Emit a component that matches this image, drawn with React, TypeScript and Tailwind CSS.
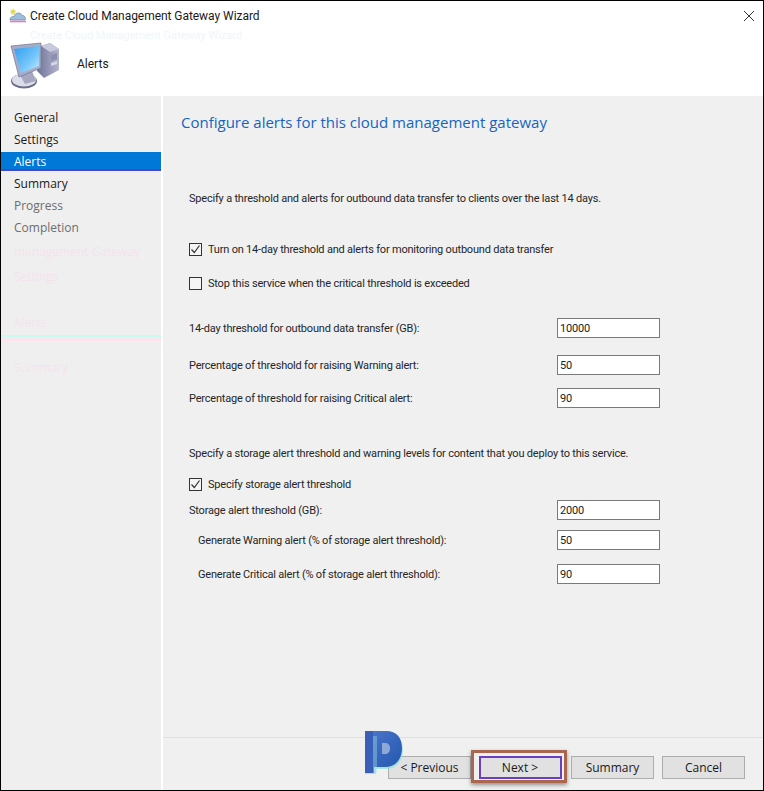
const steps = [
  { label: 'General', cls: 'h-[22px] text-[#1a1a1a]' },
  { label: 'Settings', cls: 'h-[22px] text-[#1a1a1a]' },
  { label: 'Alerts', cls: 'h-[19px] mt-[1px] mb-[2px] pt-[2px] text-white bg-[#0078d7] border-b-2 border-[#4a45c0]' },
  { label: 'Summary', cls: 'h-[22px] text-[#1a1a1a]' },
  { label: 'Progress', cls: 'h-[22px] text-[#6d6d6d]' },
  { label: 'Completion', cls: 'h-[22px] text-[#6d6d6d]' },
];

function Check({ checked }: { checked?: boolean }) {
  return (
    <span className="w-[13px] h-[13px] border border-[#333] bg-[#f4f4f4] flex items-center justify-center shrink-0">
      {checked && (
        <svg width="11" height="11" viewBox="0 0 11 11">
          <path d="M1.5 5.5 L4.3 8.5 L9.5 1.5" fill="none" stroke="#333" strokeWidth="1.2" />
        </svg>
      )}
    </span>
  );
}

function CheckRow({ label, checked, className }: { label: string; checked?: boolean; className: string }) {
  return (
    <div className={`flex items-center gap-[6px] h-[18px] ${className}`}>
      <Check checked={checked} />
      <span>{label}</span>
    </div>
  );
}

function FieldRow({ label, value, className, indent }: { label: string; value: string; className: string; indent?: boolean }) {
  return (
    <div className={`flex items-center justify-between h-[20px] ${className}`}>
      <span className={indent ? 'ml-[9px]' : ''}>{label}</span>
      <div className="w-[103px] h-[20px] border border-[#7a7a7a] bg-white flex items-center pl-[2px] text-[#222]">{value}</div>
    </div>
  );
}

function WizardButton({ label }: { label: string }) {
  return (
    <button className="w-[83px] h-[23px] border border-[#adadad] bg-[#e1e1e1] text-[#1a1a1a] text-[12px] font-['Open_Sans',sans-serif] flex items-center justify-center">
      {label}
    </button>
  );
}

function ComputerIcon() {
  return (
    <svg width="52" height="50" viewBox="0 0 52 50">
      <defs>
        <linearGradient id="screen" x1="0" y1="0" x2="1" y2="1">
          <stop offset="0" stopColor="#2f9df0" />
          <stop offset="0.6" stopColor="#74c6f8" />
          <stop offset="1" stopColor="#c9ecff" />
        </linearGradient>
        <linearGradient id="tower" x1="0" y1="0" x2="1" y2="0">
          <stop offset="0" stopColor="#6f7396" />
          <stop offset="1" stopColor="#b3b5cf" />
        </linearGradient>
      </defs>
      <path d="M31 6 L40 3 L49 9 L49 30 L34 38 L27 31 Z" fill="url(#tower)" />
      <path d="M40 3 L49 9 L40 12 L31 6 Z" fill="#c7c9dc" />
      <path d="M41 15 L47 13 L47 19 L41 21 Z" fill="#8d90ad" />
      <path d="M41 23 L47 21 L47 24 L41 26 Z" fill="#d6d7e4" />
      <ellipse cx="14" cy="41" rx="13" ry="7.5" fill="#6d6f8a" />
      <ellipse cx="14" cy="40" rx="12" ry="6.5" fill="#dcdde9" />
      <path d="M10 35 L22 31 L26 41 L15 44 Z" fill="#a6a8c2" />
      <path d="M1 6 L31 3 L31 28 L9 37 Z" fill="#a9acc6" stroke="#6f7396" strokeWidth="0.7" />
      <path d="M4 9 L29 6 L29 26 L11 33 Z" fill="url(#screen)" />
    </svg>
  );
}

function CloudIcon() {
  return (
    <svg width="18" height="16" viewBox="0 0 18 16">
      <path d="M4 0.5 V7 M1 3.7 H7 M1.8 1.5 L6.2 6 M6.2 1.5 L1.8 6" stroke="#d8d24a" strokeWidth="0.8" />
      <circle cx="4" cy="3.7" r="2" fill="#e2dc4c" />
      <path d="M1 12 C1 9 3 8.5 5 8.5 C6 4.5 12 3.5 13 7.5 C16 7.5 17 10 16 12 Z" fill="#9cc0dc" stroke="#6b7f9c" strokeWidth="0.7" />
      <path d="M1 13.5 H17" stroke="#e07cc4" strokeWidth="1.6" />
    </svg>
  );
}

function Ghost({ className, children }: { className: string; children: string }) {
  return <div className={`pl-[13px] whitespace-nowrap text-[#f6e2ee] text-[12px] ${className}`}>{children}</div>;
}

export default function App() {
  return (
    <div className="relative w-[764px] h-[791px] border border-black bg-white text-[11px] tracking-[-0.2px] leading-none text-[#262626] flex flex-col overflow-hidden font-['Roboto',sans-serif]">
      <div className="h-[30px] flex items-center shrink-0 tracking-normal">
        <span className="ml-[8px]"><CloudIcon /></span>
        <span className="ml-[3px] text-[12px] tracking-[-0.05px] text-[#1a1a1a]">Create Cloud Management Gateway Wizard</span>
        <svg className="ml-auto mr-[8px]" width="12" height="12" viewBox="0 0 12 12">
          <path d="M1 1 L11 11 M11 1 L1 11" stroke="#333" strokeWidth="1" />
        </svg>
      </div>
      <div className="relative h-[65px] flex items-start shrink-0 tracking-normal">
        <span className="absolute left-[29px] top-[-1px] text-[11px] text-[#eef6fc] whitespace-nowrap">Create Cloud Management Gateway Wizard</span>
        <span className="ml-[9px] mt-[9px]"><ComputerIcon /></span>
        <span className="ml-[15px] mt-[27px] text-[12px] text-[#1a1a1a]">Alerts</span>
      </div>
      <div className="flex flex-1 min-h-0">
        <div className="w-[160px] bg-[#efefef] pt-[11px] shrink-0 tracking-normal font-['Open_Sans',sans-serif]">
          {steps.map(s => (
            <div key={s.label} className={`flex items-center pl-[13px] text-[12px] ${s.cls}`}>{s.label}</div>
          ))}
          <Ghost className="mt-[7px]">management Gateway</Ghost>
          <Ghost className="mt-[13px]">Settings</Ghost>
          <Ghost className="mt-[34px]">Alerts</Ghost>
          <div className="mt-[6px] h-[2px] bg-[#c8fbf2]" />
          <div className="h-[4px] bg-[#fbe6f0]" />
          <Ghost className="mt-[21px]">Summary</Ghost>
        </div>
        <div className="w-[2px] bg-white shrink-0" />
        <div className="flex-1 min-w-0 bg-[#f0f0f0] flex flex-col">
          <div className="flex-1 pl-[18px]">
            <div className="mt-[16px] text-[15px] leading-[20px] tracking-normal text-[#1565c0] font-['Open_Sans',sans-serif]">Configure alerts for this cloud management gateway</div>
            <div className="pl-[8px] pr-[103px]">
              <div className="mt-[59px] h-[14px] flex items-center whitespace-nowrap">Specify a threshold and alerts for outbound data transfer to clients over the last 14 days.</div>
              <CheckRow className="mt-[35px]" checked label="Turn on 14-day threshold and alerts for monitoring outbound data transfer" />
              <CheckRow className="mt-[16px]" label="Stop this service when the critical threshold is exceeded" />
              <FieldRow className="mt-[26px]" label="14-day threshold for outbound data transfer (GB):" value="10000" />
              <FieldRow className="mt-[17px]" label="Percentage of threshold for raising Warning alert:" value="50" />
              <FieldRow className="mt-[13px]" label="Percentage of threshold for raising Critical alert:" value="90" />
              <div className="mt-[38px] h-[14px] flex items-center whitespace-nowrap">Specify a storage alert threshold and warning levels for content that you deploy to this service.</div>
              <CheckRow className="mt-[15px]" checked label="Specify storage alert threshold" />
              <FieldRow className="mt-[7px]" label="Storage alert threshold (GB):" value="2000" />
              <FieldRow className="mt-[10px]" indent label="Generate Warning alert (% of storage alert threshold):" value="50" />
              <FieldRow className="mt-[14px]" indent label="Generate Critical alert (% of storage alert threshold):" value="90" />
            </div>
          </div>
          <div className="h-[53px] border-t border-[#dfdfdf] flex items-start justify-end pr-[18px] pt-[18px] shrink-0 tracking-normal">
            <WizardButton label="< Previous" />
            <div className="relative w-[100px] h-[23px] flex justify-center">
              <div className="absolute -top-[6px] left-[0px] w-[96px] h-[33px] border-[3px] border-[#a9674f] shadow-[0_2px_4px_rgba(0,0,0,0.4)]" />
              <button className="relative ml-[-2px] w-[83px] h-[23px] border-2 border-[#6a3fc0] bg-[#e1e1e1] text-[#1a1a1a] text-[12px] font-['Open_Sans',sans-serif]">Next &gt;</button>
            </div>
            <WizardButton label="Summary" />
            <span className="w-[8px]" />
            <WizardButton label="Cancel" />
          </div>
        </div>
      </div>
      <svg className="absolute left-[360px] top-[727px]" width="44" height="48" viewBox="0 0 44 48">
        <defs>
          <linearGradient id="bowl" x1="0" y1="0" x2="1" y2="1">
            <stop offset="0" stopColor="#4f78cc" />
            <stop offset="1" stopColor="#1f55ad" />
          </linearGradient>
        </defs>
        <path d="M5 5 H26 C37 5 42 12 42 22 C42 33 35 41 25 41 H15 V46 H4 Z" fill="#8fe0d8" opacity="0.7" />
        <path d="M4 3 H25 C36 3 41 10 41 20 C41 32 34 39 24 39 H13 V45 H4 Z" fill="url(#bowl)" />
        <path d="M12 8 H16 V45 H12 Z" fill="#9ddfe0" opacity="0.4" />
        <path d="M4 3 H12 V45 H4 Z" fill="#3a5fb8" />
        <path d="M21 15 H24 C27 15 29 17 29 20 C29 24 27 26 24 26 H21 Z" fill="#8fa8d8" />
      </svg>
    </div>
  );
}
